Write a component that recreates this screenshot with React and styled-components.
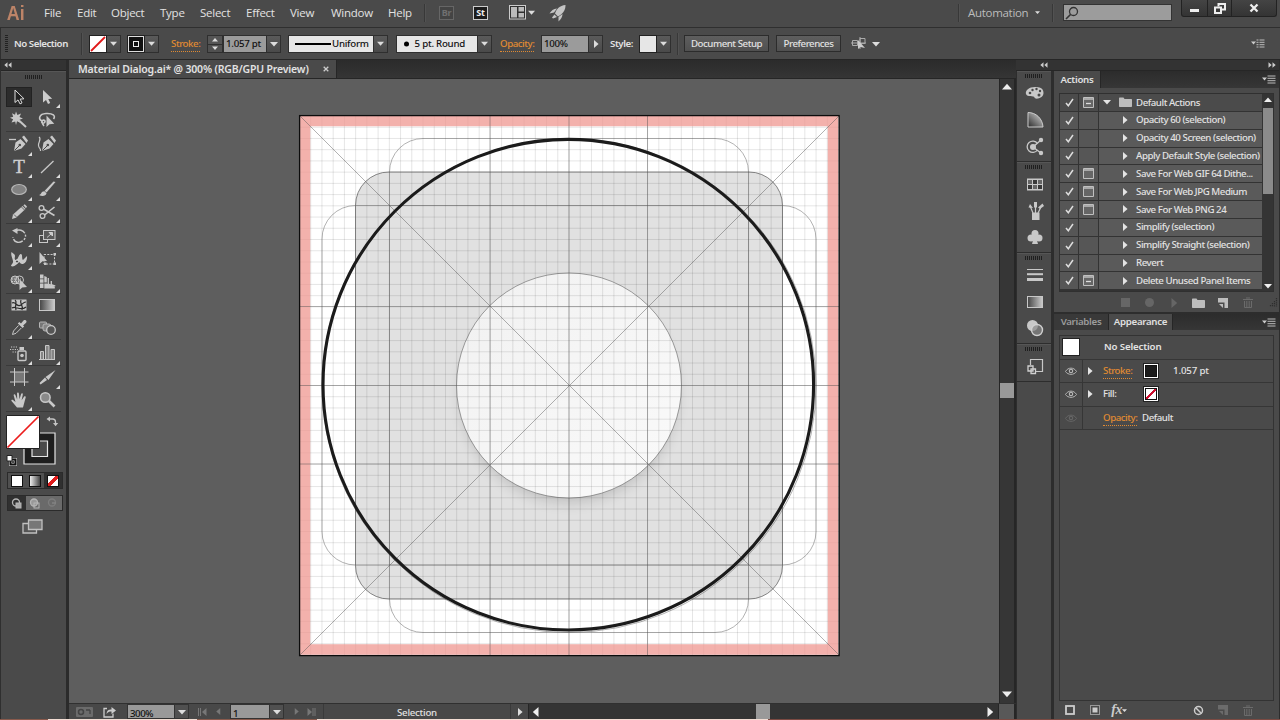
import React from 'react';
import styled, { createGlobalStyle, css } from 'styled-components';

const MENUS = [
  { name: 'File', width: 33 },
  { name: 'Edit', width: 34 },
  { name: 'Object', width: 49 },
  { name: 'Type', width: 40 },
  { name: 'Select', width: 46 },
  { name: 'Effect', width: 44 },
  { name: 'View', width: 41 },
  { name: 'Window', width: 57 },
  { name: 'Help', width: 36 },
];

const ACTIONS = [
  { name: 'Default Actions', dialog: 'minus', folder: true },
  { name: 'Opacity 60 (selection)' },
  { name: 'Opacity 40 Screen (selection)' },
  { name: 'Apply Default Style (selection)' },
  { name: 'Save For Web GIF 64 Dithe...', dialog: 'plain' },
  { name: 'Save For Web JPG Medium', dialog: 'plain' },
  { name: 'Save For Web PNG 24', dialog: 'plain' },
  { name: 'Simplify (selection)' },
  { name: 'Simplify Straight (selection)' },
  { name: 'Revert' },
  { name: 'Delete Unused Panel Items', dialog: 'minus' },
];

/* tool icons are drawn in a 20 x 20 box */
const ICONS = {
  select: (
    <path
      d="M6 3v12.5l3-2.6 2 4 2-1-1.8-3.8 3.8-.3z"
      fill="#222"
      stroke="#ddd"
      strokeWidth="1"
    />
  ),
  direct: <path d="M6 3v12.5l3-2.6 2 4 2.2-1-1.9-3.8 3.9-.3z" fill="#ccc" />,
  wand: (
    <>
      <path d="M7 1.500l1.400 3.500 3.600-1.500-1.500 3.600 3.500 1.400-3.500 1.200.8 3-3.300-1.400L7 15l-.8-3.600-3.700 1 1.600-3.200L1 7.700l3.200-1L3 3.300l3 1.500z" />
      <path d="M10 10.500l7 6.500" stroke="#c8c8c8" strokeWidth="2" />
    </>
  ),
  lasso: (
    <>
      <path
        d="M5 11C1 9 2 4 9 3.500S19 6 16.500 9M5 11c2-2 4 0 2.500 1.500S4 13 5 11c0 3 1 4 2 5"
        fill="none"
        stroke="#c8c8c8"
        strokeWidth="1.600"
      />
      <path d="M9.500 5.500v11.500l3-2.800 4.800-.4z" />
    </>
  ),
  pen: (
    <>
      <path d="M0 5.500h7" stroke="#c8c8c8" strokeWidth="1.300" />
      <path d="M5 17l1.500-8.500L11.500 5l5 5-4 4.500zM13 3l2-1.500 4 5L17.500 9z" />
      <path d="M5.500 16.500l5-5" stroke="#484848" />
      <circle cx="10.800" cy="11" r="1.300" fill="#484848" />
    </>
  ),
  curve: (
    <>
      <path d="M5 17l1.500-8.500L11.500 5l5 5-4 4.500zM13 3l2-1.500 4 5L17.500 9z" />
      <path d="M5.500 16.500l5-5" stroke="#484848" />
      <circle cx="10.800" cy="11" r="1.300" fill="#484848" />
      <path
        d="M2 3c3 2-1 5-.5 8.500S4 14 3.500 17"
        fill="none"
        stroke="#c8c8c8"
        strokeWidth="1.200"
      />
    </>
  ),
  line: <path d="M4 16L16.500 4" stroke="#c8c8c8" strokeWidth="1.300" />,
  ellipse: (
    <ellipse
      cx="10"
      cy="10.500"
      rx="7.300"
      ry="5"
      fill="#828282"
      stroke="#b8b8b8"
      strokeWidth="1.200"
    />
  ),
  brush: (
    <>
      <path d="M18.500 3L9.500 13.500 7.700 11.700 16.500 2.500z" />
      <path d="M7.500 12.200l2 2c-.5 3-4.500 3.300-7.500 1.800 2.500-.5 2-4 5.500-3.800z" />
    </>
  ),
  pencil: (
    <>
      <path d="M3 17l1-4.500L13.500 4l3 3L7 15.800z" />
      <path d="M14.300 3.200l1.500-1 2.200 2.400-1 1.700z" />
      <path d="M5 12.500l2.500 2.500M12.500 5l3 3" stroke="#484848" strokeWidth=".8" />
    </>
  ),
  scissors: (
    <>
      <circle cx="4.500" cy="6" r="2.400" fill="none" stroke="#c8c8c8" strokeWidth="1.300" />
      <circle cx="5.500" cy="14" r="2.400" fill="none" stroke="#c8c8c8" strokeWidth="1.300" />
      <path d="M6.500 7l11 6.500M7.500 13L17.500 5" stroke="#c8c8c8" strokeWidth="1.600" />
    </>
  ),
  rotate: (
    <>
      <path
        d="M6 5c7-3.500 13 3 9.500 8S4.500 17.500 4 11"
        fill="none"
        stroke="#c8c8c8"
        strokeWidth="1.400"
        strokeDasharray="11 1.500 2 1.500 2 1.500"
      />
      <path d="M3 4.500L8.500 2v6z" />
    </>
  ),
  scale: (
    <>
      <rect x="2.500" y="9.500" width="8" height="7" fill="none" stroke="#c8c8c8" />
      <rect x="6.500" y="4.500" width="11.500" height="9" fill="#5a5a5a" stroke="#c8c8c8" />
      <path d="M10 11.500l4-3.500M15.500 6.500v3.500l-3.500-3.500z" stroke="#ddd" strokeWidth=".8" />
    </>
  ),
  width: (
    <>
      <path d="M2.500 3l3 2.500c1.500 2-1 4 1 5.500 2.500.5 3-5 5-6 2.500-.5 1 5 2.500 6L18 7c.5 3-1 7-4 8-3 .5-3-2.500-4.500-2-1.500 3-5 5.500-7.500 4 0-2 2.500-2.500 2-5C3.500 9 1.500 6 2.500 3z" />
      <circle cx="8" cy="12.500" r="1.600" fill="#484848" stroke="#ddd" />
    </>
  ),
  transform: (
    <>
      <path
        d="M7 5.500h10.500v9.500H7z"
        fill="none"
        stroke="#c8c8c8"
        strokeDasharray="2 1.300"
      />
      <path d="M16.500 4h2.500v2.500h-2.500zM16.500 13.500h2.500V16h-2.500zM7 13.500h2.500V16H7z" />
      <path d="M2.500 3v12l3-2.800 4.500-.3z" />
    </>
  ),
  shapes: (
    <>
      <circle cx="6" cy="8" r="4" fill="#777" stroke="#c8c8c8" />
      <circle cx="10.500" cy="8" r="4" fill="none" stroke="#c8c8c8" />
      <path d="M3 7h10M3 9.500h9" stroke="#c8c8c8" strokeDasharray="1 1" />
      <path d="M10.500 7v11l2.700-2.600 4.800-.3z" />
    </>
  ),
  perspective: (
    <>
      <path d="M3 2.500h3.500v4H3zM3 7.300h3.500v3.500H3zM3 11.600h3.500V16H3zM7.300 4l2.500 1v5.500H7.300zM7.300 11.500h2.500l8 3.500v1.500H7.300z" />
      <path d="M11.300 6v6l6 2.500M14.300 9v3.500l4 1.500" fill="none" stroke="#c8c8c8" strokeWidth="1.300" />
    </>
  ),
  mesh: (
    <>
      <rect x="2.500" y="4.500" width="15" height="11" fill="#c4c4c4" />
      <path
        d="M3 8c4-2 5 5 9 2s3-3 5-3M6 5c3 2-1 5 1 10M12 5c-2 4 3 5 1 10M3 13c4-3 8 4 14-1"
        fill="none"
        stroke="#292929"
        strokeWidth="1.200"
      />
    </>
  ),
  gradient: (
    <rect x="2.500" y="4.500" width="15" height="11" fill="url(#grey)" stroke="#c8c8c8" />
  ),
  eyedropper: (
    <>
      <path d="M12 5.500l2.500-3c2-1.500 4 .5 2.600 2.300l-3 2.800 1 1-1.500 1.400-4.800-4.600L10.300 4z" />
      <path d="M9.500 7.500L4.500 13 3.500 16.500 7 15.300 12.300 10" fill="none" stroke="#c8c8c8" />
    </>
  ),
  blend: (
    <>
      <rect x="2.500" y="4" width="7" height="6" rx="1" fill="#777" stroke="#b5b5b5" />
      <rect x="6" y="6" width="8" height="7" rx="2" fill="#858585" stroke="#b5b5b5" />
      <circle cx="14" cy="12" r="4.300" fill="#555" stroke="#c8c8c8" strokeWidth="1.300" />
    </>
  ),
  spray: (
    <>
      <rect x="9" y="8" width="8" height="9.500" rx="1" fill="none" stroke="#c8c8c8" strokeWidth="1.400" />
      <path d="M10.500 4h4.500v3h-4.500z" />
      <circle cx="13" cy="12.500" r="1.800" />
      <path d="M2 4h7M1 6.500h8M3.500 9H8" stroke="#c8c8c8" strokeDasharray="1.200 1.200" />
    </>
  ),
  graph: (
    <g fill="#858585" stroke="#c8c8c8">
      <path d="M3.500 8.500h3v8h-3zM8.500 2.500h3.500v14H8.500zM14 6.500h3.500v10H14z" />
      <path d="M2 16.500h16" />
    </g>
  ),
  artboard: (
    <>
      <rect x="5.500" y="5" width="10" height="10" fill="#777" />
      <path d="M5.500 1v18M15.500 1v18M1 5h18.500M1 15h18.500" stroke="#c8c8c8" />
    </>
  ),
  slice: (
    <path d="M18.500 3l-10 7 3 3zM8 10.500L2.500 16l1 1.500L10 13z" />
  ),
  hand: (
    <path
      d="M8 17.500L2.500 11c-.6-1.200.9-1.800 1.800-.8L6.500 12 4.700 5.500c-.2-1.500 1.300-1.700 1.700-.4L8.200 9.500 8 3.500c0-1.500 1.800-1.500 1.900 0l.6 5.800 1.600-5.200c.5-1.300 2-.8 1.700.6l-1.200 5.500 2.400-3.500c.9-1 2.200-.2 1.600 1L14 17.500z"
    />
  ),
  zoom: (
    <>
      <circle cx="8.300" cy="7.500" r="4.800" fill="#8a8a8a" stroke="#c8c8c8" strokeWidth="1.500" />
      <path d="M12 11l5.500 5.500" stroke="#c8c8c8" strokeWidth="2.600" />
    </>
  ),
  palette: (
    <>
      <path d="M10 4C4 4 0 7.500 1 11s8 1 8.500 3.500 9 1 9-4.500S14 4 10 4z" />
      <g fill="#484848">
        <circle cx="5" cy="10" r="1.300" />
        <circle cx="7.500" cy="7" r="1.200" />
        <circle cx="11.500" cy="6" r="1.200" />
        <circle cx="15" cy="8" r="1.200" />
        <circle cx="14" cy="12" r="1.500" />
      </g>
    </>
  ),
  guide: (
    <path d="M3 17V2.500C11 2.500 17.500 8.500 18 17z" fill="url(#guide)" stroke="#ccc" />
  ),
  nodes: (
    <>
      <path
        d="M12.500 7.500a5.700 5.700 0 1 0 0 6.500"
        fill="none"
        stroke="#c8c8c8"
        strokeWidth="1.300"
      />
      <circle cx="8" cy="11" r="3" />
      <path d="M8 11l8-7M8 11l8.500 6.500" stroke="#c8c8c8" strokeWidth="1.400" />
      <circle cx="16" cy="4" r="2.200" />
      <circle cx="16" cy="17" r="2.200" />
    </>
  ),
  swatches: (
    <>
      <rect x="2" y="4.500" width="16" height="12" fill="#c8c8c8" />
      <path d="M3 6h4v4H3zM13 6h4v4h-4zM8 11h4v4H8z" fill="#666" />
      <path d="M8 6h4v4H8zM3 11h4v4H3zM13 11h4v4h-4z" fill="#393939" />
    </>
  ),
  brushes: (
    <>
      <path d="M7 11.500h7.500v7.500H7z" />
      <path d="M8 12L5.500 6M10.500 12V5M13 12l2.500-5" stroke="#c8c8c8" strokeWidth="1.200" />
      <path d="M3.500 6.500l1.500-3.500 3 4zM9 1h3v5.500H9zM13 6.500l4.500-4L19 5l-4 3z" />
    </>
  ),
  club: (
    <>
      <circle cx="10" cy="6.500" r="3.500" />
      <circle cx="6" cy="11" r="3.500" />
      <circle cx="14" cy="11" r="3.500" />
      <path d="M9.300 9h1.400l2.300 8H7z" />
    </>
  ),
  stroke: (
    <>
      <path d="M2 4.500h16" stroke="#c8c8c8" strokeWidth="1" />
      <path d="M2 9.200h16" stroke="#c8c8c8" strokeWidth="2" />
      <path d="M2 14.500h16" stroke="#c8c8c8" strokeWidth="3" />
    </>
  ),
  transparency: (
    <>
      <circle cx="7.500" cy="7.500" r="5.500" />
      <circle cx="12" cy="12" r="5.500" fill="#888" fillOpacity=".7" stroke="#d0d0d0" strokeWidth="1.400" />
    </>
  ),
  layers: (
    <>
      <path d="M5.500 9V3.500h12v12H11" fill="none" stroke="#c8c8c8" strokeWidth="1.200" />
      <path d="M3 10h5v5H3zM6 13h4.500v4.500H6z" fill="#484848" stroke="#d0d0d0" strokeWidth="1.300" />
    </>
  ),
};

const TOOL_GROUPS = [
  { id: 'selection', row: 23, tools: [['select', 'active'], ['direct', 'more'], ['wand'], ['lasso']] },
  {
    id: 'drawing',
    row: 22.5,
    top: 1,
    tools: [
      ['pen', 'more'],
      ['curve'],
      ['type', 'more'],
      ['line', 'more'],
      ['ellipse', 'more'],
      ['brush', 'more'],
      ['pencil', 'more'],
      ['scissors', 'more'],
    ],
  },
  {
    id: 'shape',
    row: 23,
    tools: [
      ['rotate', 'more'],
      ['scale', 'more'],
      ['width', 'more'],
      ['transform'],
      ['shapes', 'more'],
      ['perspective', 'more'],
    ],
  },
  { id: 'paint', row: 22.5, tools: [['mesh'], ['gradient'], ['eyedropper', 'more'], ['blend']] },
  { id: 'symbols', row: 25, tools: [['spray', 'more'], ['graph', 'more']] },
  { id: 'view', row: 22.5, tools: [['artboard'], ['slice', 'more'], ['hand', 'more'], ['zoom']] },
];

const DOCK_GROUPS = [
  { id: 'color', height: 91, icons: ['palette', 'guide', 'nodes'] },
  { id: 'swatch', height: 91, icons: ['swatches', 'brushes', 'club'] },
  { id: 'stroke', height: 91, icons: ['stroke', 'gradient', 'transparency'] },
  { id: 'layers', height: 38, icons: ['layers'] },
];

function Glyph({ name, size = 20 }) {
  return (
    <Svg width={size} height={size} viewBox="0 0 20 20" fill="#c8c8c8">
      {ICONS[name]}
    </Svg>
  );
}

function Arrow({ dir = 'down', size = 8, color = '#ddd' }) {
  const turn = { down: 0, up: 180, left: 90, right: 270 }[dir];
  return (
    <Svg width={size} height={size} viewBox="0 0 10 10">
      <path d="M0 2.500h10L5 8.200z" fill={color} transform={`rotate(${turn} 5 5)`} />
    </Svg>
  );
}

function MenuBar() {
  return (
    <StyledMenuBar>
      <AppLogo>Ai</AppLogo>
      {MENUS.map(({ name, width }) => (
        <MenuItem key={name} $width={width}>
          {name}
        </MenuItem>
      ))}
      <Divider />
      <Badge $ml={14} $dim>
        Br
      </Badge>
      <Badge $ml={19}>St</Badge>
      <Slot $ml={21}>
        <Svg width="17" height="15" viewBox="0 0 17 15">
          <rect x=".5" y=".5" width="16" height="13.500" fill="#303030" stroke="#ccc" />
          <path d="M2 2h6v10.500H2zM9.500 2H15v4.500H9.500zM9.500 8H15v4.500H9.500z" fill="#bbb" />
        </Svg>
      </Slot>
      <Slot $ml={2}>
        <Arrow size={7} />
      </Slot>
      <Slot $ml={14}>
        <Svg width="18" height="18" viewBox="0 0 18 18" fill="#c4c4c4">
          <path d="M16.500 1c-6 .5-9 4-10.500 8.500l3 3C13.500 10 16.500 7 16.500 1z" />
          <path d="M8 4.500C4.500 4.500 2 7 .5 9.500L5 8.500zM13.500 10c0 3-1.500 5-4 7.500v-4.500zM5.500 10.500l2.500 2.500-4 1.500-1-1z" />
        </Svg>
      </Slot>
      <Spacer />
      <Divider />
      <Workspace>Automation</Workspace>
      <Slot $ml={6}>
        <Arrow size={5} />
      </Slot>
      <Divider $ml={12} />
      <SearchBox>
        <Svg width="14" height="14" viewBox="0 0 14 14">
          <circle cx="8.500" cy="5.500" r="4" fill="none" stroke="#333" strokeWidth="1.300" />
          <path d="M5.500 8.500L1 13" stroke="#333" strokeWidth="1.600" />
        </Svg>
      </SearchBox>
      <WindowButtons>
        <WindowButton $width={25}>
          <Svg width="11" height="10">
            <path d="M1 7.500h9" stroke="#eee" strokeWidth="3" />
          </Svg>
        </WindowButton>
        <WindowButton $width={24}>
          <Svg width="12" height="11" viewBox="0 0 12 11" fill="none" stroke="#eee" strokeWidth="2">
            <path d="M4.500 3.500V1H11v5.500H8" />
            <path d="M1 4.500h6V10H1z" />
          </Svg>
        </WindowButton>
        <WindowButton $width={45}>
          <Svg width="10" height="10" viewBox="0 0 10 10">
            <path d="M1.500 1.500l7 7M8.500 1.500l-7 7" stroke="#eee" strokeWidth="2.300" />
          </Svg>
        </WindowButton>
      </WindowButtons>
    </StyledMenuBar>
  );
}

function ControlBar() {
  return (
    <StyledControlBar>
      <Grip $vertical />
      <Label $width={67} $ml={6} $bold>
        No Selection
      </Label>
      <Divider $tall />
      <Swatch $ml={7}>
        <Svg width="16" height="16">
          <path d="M1 15L15 1" stroke="#e01818" strokeWidth="1.800" />
        </Svg>
      </Swatch>
      <DropButton>
        <Arrow size={7} />
      </DropButton>
      <Swatch $ml={6} $dark>
        <Svg width="16" height="16" fill="none">
          <rect x=".5" y=".5" width="15" height="15" stroke="#ddd" />
          <rect x="5.500" y="5.500" width="5" height="5" stroke="#eee" />
        </Svg>
      </Swatch>
      <DropButton>
        <Arrow size={7} />
      </DropButton>
      <Label $width={36} $ml={12}>
        <Hot>Stroke:</Hot>
      </Label>
      <Spinner>
        <Arrow dir="up" size={6} />
        <Arrow size={6} />
      </Spinner>
      <Field $width={44}>1.057 pt</Field>
      <DropButton>
        <Arrow size={8} />
      </DropButton>
      <Field $light $width={86} $ml={7}>
        <Svg width="38" height="4">
          <path d="M1 2h36" stroke="#000" strokeWidth="2" />
        </Svg>
        <span>Uniform</span>
      </Field>
      <DropButton>
        <Arrow size={7} />
      </DropButton>
      <Field $light $wide $width={82} $ml={8}>
        <Svg width="10" height="6">
          <circle cx="4.500" cy="3" r="2.500" />
        </Svg>
        <span>5 pt. Round</span>
      </Field>
      <DropButton>
        <Arrow size={7} />
      </DropButton>
      <Label $width={41} $ml={8}>
        <Hot>Opacity:</Hot>
      </Label>
      <Field $width={48}>100%</Field>
      <DropButton>
        <Arrow dir="right" size={8} />
      </DropButton>
      <Label $width={29} $ml={7} $bold>
        Style:
      </Label>
      <Swatch $soft />
      <DropButton>
        <Arrow size={7} />
      </DropButton>
      <Divider $ml={6} $tall />
      <PushButton $width={85} $ml={6}>
        Document Setup
      </PushButton>
      <PushButton $width={65} $ml={7}>
        Preferences
      </PushButton>
      <Slot $ml={10}>
        <Svg width="16" height="13" viewBox="0 0 16 13">
          <path d="M1.500 3.500h5v5h-5zM9 1.500h5v5H9zM0 6h15M9 0v12" fill="none" stroke="#aaa" />
          <path d="M7 3v9l2.500-2 4.500 1z" fill="#ccc" />
        </Svg>
      </Slot>
      <Slot $ml={5}>
        <Arrow size={8} />
      </Slot>
      <Spacer />
      <MenuGlyph $right={15}>
        <PanelMenuIcon dotted />
      </MenuGlyph>
    </StyledControlBar>
  );
}

function PanelMenuIcon({ dotted }) {
  return (
    <Svg width="14" height="9" viewBox="0 0 14 9">
      <path d="M0 2.500h5L2.500 5.500z" fill="#ccc" />
      <path
        d="M5.500 1h8M5.500 3.300h8M5.500 5.700h8M5.500 8h8"
        stroke="#bbb"
        strokeWidth="1"
        strokeDasharray={dotted ? '2 1 6' : undefined}
      />
    </Svg>
  );
}

function CollapseArrows({ right }) {
  return (
    <Svg width="8" height="6" viewBox="0 0 8 6">
      <path
        d="M3.500 .3v5.400L.3 3zM7.500 .3v5.400L4.300 3z"
        fill="#ccc"
        transform={right ? 'rotate(180 4 3)' : undefined}
      />
    </Svg>
  );
}

function Toolbox() {
  return (
    <StyledToolbox>
      <DockHeader>
        <CollapseArrows />
      </DockHeader>
      <ToolboxBody>
        <GripRow $height={13}>
          <Grip />
        </GripRow>
        {TOOL_GROUPS.map(({ id, row, top, tools }) => (
          <ToolGroup key={id} $row={row} $top={top}>
            {tools.map(([name, state]) => (
              <Tool key={name} $active={state === 'active'} $more={state === 'more'}>
                {name === 'type' ? <TypeGlyph>T</TypeGlyph> : <Glyph name={name} />}
              </Tool>
            ))}
          </ToolGroup>
        ))}
        <ColorWell>
          <Svg width="60" height="55" viewBox="0 0 60 55">
            <path d="M18 21h31v31H18z" fill="#1e1e1e" stroke="#e4e4e4" strokeWidth="1.200" />
            <path d="M26 29h15.500v15.500H26z" fill="#4a4a4a" stroke="#e4e4e4" strokeWidth="1.200" />
            <path d="M.5 3.500h33v33h-33z" fill="#fff" stroke="#222" />
            <path d="M1.500 35.500l31-31" stroke="#ec1c1c" strokeWidth="1.700" />
            <path d="M43 7h3.500c2 0 3 1 3 3v2" fill="none" stroke="#c4c4c4" strokeWidth="1.300" />
            <path d="M40.500 7l3.500-2.500v5zM47 11h5.200l-2.600 3.200z" fill="#c4c4c4" />
            <path d="M4.500 47.500h5v5h-5z" fill="none" stroke="#ddd" strokeWidth="3" />
            <path d="M4.500 47.500h5v5h-5z" fill="none" stroke="#111" strokeWidth="2" />
            <path d="M1 43.500h5v5.500H1z" fill="#fff" stroke="#222" />
          </Svg>
        </ColorWell>
        <ModeRow>
          <ModeCell>
            <Chip $fill="#fff" />
          </ModeCell>
          <ModeCell>
            <Chip $fill="linear-gradient(90deg, #eee, #444)" />
          </ModeCell>
          <ModeCell $active>
            <Chip $fill="linear-gradient(135deg, #fff 37%, #e01c1c 38% 62%, #fff 63%)" />
          </ModeCell>
        </ModeRow>
        <ModeRow $short>
          <ModeCell $active>
            <DrawIcon />
          </ModeCell>
          <ModeCell $lit>
            <DrawIcon behind />
          </ModeCell>
          <ModeCell $lit>
            <DrawIcon dim />
          </ModeCell>
        </ModeRow>
        <ScreenMode>
          <Svg width="21" height="16" viewBox="0 0 21 16">
            <path d="M1 4.500h13.500v9.500H1z" fill="#555" stroke="#c0c0c0" strokeWidth="1.300" />
            <path d="M6.500 1h13.500v9.500H6.500z" fill="#777" stroke="#c0c0c0" strokeWidth="1.300" />
          </Svg>
        </ScreenMode>
      </ToolboxBody>
    </StyledToolbox>
  );
}

function DrawIcon({ behind, dim }) {
  return (
    <Svg width="12" height="11" viewBox="0 0 12 11" opacity={dim ? 0.25 : 1}>
      <circle cx="5" cy="4.500" r="3.500" fill={behind ? '#999' : 'none'} stroke="#b5b5b5" strokeWidth="1.300" />
      {!dim && <rect x="5" y="5" width="5" height="5" fill={behind ? 'none' : '#aaa'} stroke="#b5b5b5" />}
      {dim && <path d="M5 5h4" stroke="#ccc" strokeWidth="1.500" />}
    </Svg>
  );
}

const UNIT = 11.23;
const CX = 569;
const CY = 385.5;
const steps = Array.from({ length: 47 }, (_, i) => (i - 23) * UNIT);

function Artboard() {
  return (
    <Svg width="541" height="541" viewBox="299 115 541 541">
      <defs>
        <linearGradient id="disc" x1="0" y1="0" x2="1" y2="1">
          <stop offset="0" stopColor="#f1f1f1" />
          <stop offset="1" stopColor="#fafafa" />
        </linearGradient>
        <filter id="soft" x="-20%" y="-20%" width="140%" height="150%">
          <feGaussianBlur stdDeviation="7" />
        </filter>
      </defs>
      <rect x="299.500" y="115.500" width="539.500" height="540" fill="#fff" />
      <rect x="355.500" y="172" width="427" height="427" rx="33.500" fill="#e1e1e1" />
      <circle cx={CX} cy={CY + 9} r="108" fill="#000" opacity=".15" filter="url(#soft)" />
      <circle cx={CX} cy={CY} r="112.500" fill="url(#disc)" />
      <g stroke="#000" strokeOpacity=".1">
        {steps.map((d) => (
          <path key={d} d={`M${CX + d} 116v539M300 ${CY + d}h539`} />
        ))}
      </g>
      <rect
        x="305"
        y="121"
        width="528"
        height="528.500"
        fill="none"
        stroke="#ee938c"
        strokeOpacity=".72"
        strokeWidth="10.500"
      />
      <g fill="none" stroke="#555" strokeOpacity=".45" strokeWidth="1">
        <rect x="389.500" y="138.500" width="359" height="494" rx="33.500" />
        <rect x="322" y="205.500" width="494" height="359.500" rx="33.500" />
        <rect x="355.500" y="172" width="427" height="427" rx="33.500" strokeOpacity=".7" />
        <circle cx={CX} cy={CY} r="247" />
        <circle cx={CX} cy={CY} r="112.500" strokeOpacity=".55" />
        <path d="M490 116v539M569 116v539M647.500 116v539M300 306.500h539M300 385.500h539M300 464h539" />
        <path d="M300 116l539 539M839 116L300 655" />
        <path d="M389.500 206v359M748.500 206v359M389.500 205.500h359M389.500 565h359" strokeOpacity=".2" />
      </g>
      <circle cx="568.300" cy="384.700" r="245.300" fill="none" stroke="#1b1b1b" strokeWidth="3.100" />
      <rect x="299.600" y="115.600" width="539.500" height="540" fill="none" stroke="#0c0c0c" strokeWidth="1.300" />
    </Svg>
  );
}

function StatusBar() {
  return (
    <StyledStatusBar>
      <Slot $ml={7}>
        <Svg width="17" height="10" viewBox="0 0 17 10">
          <rect width="17" height="10" rx="1" fill="#6b6b6b" />
          <circle cx="5" cy="5" r="2.500" fill="none" stroke="#444" strokeWidth="1.500" />
          <path d="M10 3l4 0M14 3v4" stroke="#444" strokeWidth="1.300" />
        </Svg>
      </Slot>
      <Slot $ml={10}>
        <Svg width="13" height="12" viewBox="0 0 13 12">
          <path d="M4 2.500H1v8.500h9V7.500" fill="none" stroke="#ccc" strokeWidth="1.300" />
          <path d="M3.500 8C4 4 6 3.500 8.500 3.500V1L13 4.500 8.500 8V5.500C6 5.500 5 6 3.500 8z" fill="#ccc" />
        </Svg>
      </Slot>
      <StatusField $ml={11} $width={48}>
        300%
      </StatusField>
      <StatusDrop>
        <Arrow size={8} />
      </StatusDrop>
      <Slot $ml={9}>
        <Svg width="9" height="8">
          <path d="M.5 0v8M2.500 0v8" stroke="#777" />
          <path d="M8.500 0v8L4 4z" fill="#777" />
        </Svg>
      </Slot>
      <Slot $ml={8}>
        <Arrow dir="left" size={7} color="#777" />
      </Slot>
      <StatusField $ml={8} $width={40}>
        1
      </StatusField>
      <StatusDrop>
        <Arrow size={8} />
      </StatusDrop>
      <Slot $ml={9}>
        <Arrow dir="right" size={7} color="#777" />
      </Slot>
      <Slot $ml={7}>
        <Svg width="9" height="8">
          <path d="M6 0v8M8 0v8" stroke="#777" />
          <path d="M.5 0v8L5 4z" fill="#777" />
        </Svg>
      </Slot>
      <StatusText>Selection</StatusText>
      <StatusNext>
        <Arrow dir="right" size={8} />
      </StatusNext>
      <HorizontalTrack>
        <Arrow dir="left" size={10} color="#eee" />
        <HorizontalThumb />
        <Arrow dir="right" size={10} color="#eee" />
      </HorizontalTrack>
      <Corner />
    </StyledStatusBar>
  );
}

function Document() {
  return (
    <StyledDocument>
      <DocumentTabs>
        <DocumentTab>
          <span>Material Dialog.ai* @ 300% (RGB/GPU Preview)</span>
          <Svg width="6" height="6" viewBox="0 0 6 6">
            <path d="M.7 .7l4.600 4.600M5.300 .7L.7 5.300" stroke="#ccc" strokeWidth="1.300" />
          </Svg>
        </DocumentTab>
      </DocumentTabs>
      <CanvasRow>
        <Canvas>
          <Artboard />
        </Canvas>
        <VerticalTrack>
          <Arrow dir="up" size={10} color="#eee" />
          <VerticalThumb />
          <Arrow size={10} color="#eee" />
        </VerticalTrack>
      </CanvasRow>
      <StatusBar />
    </StyledDocument>
  );
}

function IconDock() {
  return (
    <StyledIconDock>
      {DOCK_GROUPS.map(({ id, height, icons }) => (
        <DockGroup key={id} $height={height}>
          <GripRow $height={9}>
            <Grip />
          </GripRow>
          <DockIcons>
            {icons.map((name) => (
              <Glyph key={name} name={name} />
            ))}
          </DockIcons>
        </DockGroup>
      ))}
    </StyledIconDock>
  );
}

function ActionRow({ name, dialog, folder }) {
  return (
    <StyledActionRow>
      <ActionCell $folder={folder}>
        <Svg width="9" height="9" viewBox="0 0 9 9">
          <path d="M1 5l2.300 2.800L8 1" fill="none" stroke="#ddd" strokeWidth="1.500" />
        </Svg>
      </ActionCell>
      <ActionCell $folder={folder}>
        {dialog && (
          <Svg width="11" height="11" viewBox="0 0 11 11">
            <path d="M.5 .5h10v10H.5z" fill="#666" stroke="#c0c0c0" />
            <path d="M.5 2h10" stroke="#c0c0c0" strokeWidth="1.500" />
            {dialog === 'minus' && <path d="M3 6.500h5" stroke="#ddd" strokeWidth="1.300" />}
          </Svg>
        )}
      </ActionCell>
      <ActionName $folder={folder}>
        <Arrow dir={folder ? 'down' : 'right'} size={8} color="#e4e4e4" />
        {folder && <FolderIcon />}
        <span>{name}</span>
      </ActionName>
    </StyledActionRow>
  );
}

function FolderIcon() {
  return (
    <Svg width="13" height="10" viewBox="0 0 13 10">
      <path d="M0 1.200Q0 .5.700.5h3.800l1 1.500H12.300q.7 0 .7.700V9.300q0 .7-.7.700H.7Q0 10 0 9.300z" fill="#bdbdbd" />
    </Svg>
  );
}

function NewIcon({ color = '#bdbdbd' }) {
  return (
    <Svg width="10" height="10" viewBox="0 0 10 10">
      <path d="M0 0h10v10H6.500V4.500H0z" fill={color} />
      <path d="M1 6h4v4z" fill={color} />
    </Svg>
  );
}

function TrashIcon() {
  return (
    <Svg width="10" height="11" viewBox="0 0 10 11" fill="none" stroke="#6b6b6b">
      <path d="M0 2.500h10M3 1h4M1.500 4v6.500h7V4M3.800 4v6M6.200 4v6" />
    </Svg>
  );
}

function ResizeGrip() {
  return (
    <Svg width="9" height="9" viewBox="0 0 9 9">
      <path
        d="M7.500 0v9M5.500 3v6M3.500 5v4M1.500 7v2"
        stroke="#2e2e2e"
        strokeWidth="1.200"
        strokeDasharray="1.200 .9"
      />
    </Svg>
  );
}

function ActionsPanel() {
  return (
    <>
      <PanelTabs $height={17}>
        <PanelTab $active $width={47}>
          Actions
        </PanelTab>
        <Spacer />
        <MenuGlyph $right={3}>
          <PanelMenuIcon />
        </MenuGlyph>
      </PanelTabs>
      <PanelBody $height={224}>
        <ActionBox>
          <ActionList>
            {ACTIONS.map((action) => (
              <ActionRow key={action.name} {...action} />
            ))}
          </ActionList>
          <ListTrack>
            <Arrow dir="up" size={8} color="#eee" />
            <ListThumb />
            <Spacer />
            <Arrow size={8} color="#eee" />
          </ListTrack>
        </ActionBox>
        <PanelFooter $height={21} $left={62}>
          <FooterCell>
            <Svg width="9" height="9">
              <path d="M0 0h9v9H0z" fill="#666" />
            </Svg>
          </FooterCell>
          <FooterCell>
            <Svg width="9" height="9">
              <circle cx="4.500" cy="4.500" r="4.500" fill="#666" />
            </Svg>
          </FooterCell>
          <FooterCell>
            <Arrow dir="right" size={10} color="#666" />
          </FooterCell>
          <FooterCell>
            <FolderIcon />
          </FooterCell>
          <FooterCell>
            <NewIcon />
          </FooterCell>
          <FooterCell>
            <TrashIcon />
          </FooterCell>
          <Spacer />
          <ResizeGrip />
        </PanelFooter>
      </PanelBody>
    </>
  );
}

function Eye({ dim }) {
  return (
    <Svg width="12" height="8" viewBox="0 0 12 8" opacity={dim ? 0.25 : 1}>
      <path d="M.5 4.500C3 0 9 0 11.500 4.500 9 8.300 3 8.300.5 4.500z" fill="#444" stroke="#b5b5b5" />
      <circle cx="6" cy="4" r="2.300" fill="#b5b5b5" />
      <circle cx="6" cy="4" r="1" fill="#333" />
    </Svg>
  );
}

function AppearancePanel() {
  return (
    <>
      <PanelTabs $height={16}>
        <PanelTab $width={55}>Variables</PanelTab>
        <PanelTab $active $width={64}>
          Appearance
        </PanelTab>
        <Spacer />
        <MenuGlyph $right={3}>
          <PanelMenuIcon />
        </MenuGlyph>
      </PanelTabs>
      <PanelBody $grow>
        <AppearanceBox>
          <AppearanceRow>
            <Thumbnail />
            <Label $ml={24} $bold $roomy>
              No Selection
            </Label>
          </AppearanceRow>
          <AppearanceRow>
            <EyeCell>
              <Eye />
            </EyeCell>
            <Arrow dir="right" size={8} color="#e4e4e4" />
            <Label $width={40} $ml={9}>
              <Hot>Stroke:</Hot>
            </Label>
            <MiniSwatch>
              <Chip $fill="#1c1c1c" />
            </MiniSwatch>
            <Label $ml={14} $roomy>
              1.057 pt
            </Label>
          </AppearanceRow>
          <AppearanceRow>
            <EyeCell>
              <Eye />
            </EyeCell>
            <Arrow dir="right" size={8} color="#e4e4e4" />
            <Label $width={40} $ml={9}>
              Fill:
            </Label>
            <MiniSwatch>
              <Chip $fill="linear-gradient(135deg, #fff 40%, #cc1030 41% 59%, #fff 60%)" />
            </MiniSwatch>
          </AppearanceRow>
          <AppearanceRow>
            <EyeCell>
              <Eye dim />
            </EyeCell>
            <Label $width={39} $ml={17}>
              <Hot>Opacity:</Hot>
            </Label>
            <Label>Default</Label>
          </AppearanceRow>
        </AppearanceBox>
        <PanelFooter $height={18} $left={7}>
          <FooterCell>
            <Svg width="10" height="10">
              <rect x="1" y="1" width="8" height="8" fill="none" stroke="#ccc" strokeWidth="1.800" />
            </Svg>
          </FooterCell>
          <FooterCell>
            <Svg width="10" height="10">
              <rect x=".5" y=".5" width="9" height="9" fill="none" stroke="#999" />
              <rect x="2.500" y="2.500" width="5" height="5" fill="#ccc" />
            </Svg>
          </FooterCell>
          <FooterCell>
            <Fx>fx</Fx>
            <Arrow size={5} />
          </FooterCell>
          <Spacer />
          <FooterCell>
            <Svg width="11" height="11">
              <circle cx="5.500" cy="5.500" r="4" fill="none" stroke="#ccc" strokeWidth="1.500" />
              <path d="M2.500 2.500l6 6" stroke="#ccc" strokeWidth="1.500" />
            </Svg>
          </FooterCell>
          <FooterCell>
            <NewIcon color="#6b6b6b" />
          </FooterCell>
          <FooterCell $last>
            <TrashIcon />
          </FooterCell>
        </PanelFooter>
      </PanelBody>
    </>
  );
}

function App() {
  return (
    <Page>
      <GlobalStyle />
      <Defs width="0" height="0">
        <linearGradient id="grey">
          <stop offset="0" stopColor="#444" />
          <stop offset="1" stopColor="#ccc" />
        </linearGradient>
        <linearGradient id="guide" x1="0" y1="1" x2="1" y2="0">
          <stop offset="0" stopColor="#2a2a2a" />
          <stop offset="1" stopColor="#ddd" />
        </linearGradient>
      </Defs>
      <MenuBar />
      <ControlBar />
      <Workbench>
        <Toolbox />
        <Document />
        <RightSide>
          <DockHeader $split>
            <CollapseArrows />
            <CollapseArrows right />
          </DockHeader>
          <RightColumns>
            <IconDock />
            <Panels>
              <ActionsPanel />
              <AppearancePanel />
            </Panels>
          </RightColumns>
        </RightSide>
      </Workbench>
      <BottomEdge />
    </Page>
  );
}

const GlobalStyle = createGlobalStyle`
  * {
    box-sizing: border-box;
  }
  body {
    margin: 0;
    overflow: hidden;
    background: #2b2b2b;
  }
`;

const Page = styled.div`
  width: 1280px;
  height: 720px;
  display: flex;
  flex-direction: column;
  background: #2d2d2d;
  color: #e2e2e2;
  font-family: 'Noto Sans', 'Liberation Sans', sans-serif;
  font-size: 9.7px;
  font-weight: 500;
  letter-spacing: -0.45px;
  line-height: 1;
  white-space: nowrap;
  overflow: hidden;
`;

const Svg = styled.svg`
  display: block;
  flex: none;
  overflow: visible;
`;

const Defs = styled.svg`
  position: absolute;
`;

const Spacer = styled.div`
  flex: 1;
`;

const Slot = styled.div`
  flex: none;
  margin-left: ${({ $ml }) => $ml || 0}px;
`;

const Divider = styled.div`
  flex: none;
  width: 1px;
  height: ${({ $tall }) => ($tall ? 22 : 18)}px;
  margin-left: ${({ $ml }) => $ml || 0}px;
  background: #383838;
  box-shadow: 1px 0 #525252;
`;

const StyledMenuBar = styled.header`
  flex: none;
  height: 28px;
  display: flex;
  align-items: center;
  padding-bottom: 2px;
  background: #4a4a4a;
  border-bottom: 1px solid #2f2f2f;
`;

const AppLogo = styled.div`
  width: 36px;
  padding-left: 8px;
  color: #bd8468;
  font-size: 21px;
  font-weight: 700;
  letter-spacing: 0;
  font-family: 'Liberation Sans', sans-serif;
  transform: scaleX(0.85);
  transform-origin: left;
`;

const MenuItem = styled.div`
  flex: none;
  box-sizing: content-box;
  width: ${({ $width }) => $width}px;
  font-family: 'Open Sans', sans-serif;
  font-size: 11.5px;
  font-weight: 500;
  letter-spacing: -0.25px;

  ${AppLogo} + & {
    margin-left: 8px;
  }
`;

const Badge = styled.div`
  flex: none;
  width: 15px;
  height: 14px;
  margin-left: ${({ $ml }) => $ml}px;
  border: 1px solid ${({ $dim }) => ($dim ? '#666' : '#ccc')};
  background: ${({ $dim }) => ($dim ? '#444' : '#1d1d1d')};
  color: ${({ $dim }) => ($dim ? '#707070' : '#eee')};
  font-size: 9px;
  font-weight: 700;
  letter-spacing: -0.2px;
  line-height: 12px;
  text-align: center;
`;

const Workspace = styled.div`
  width: 61px;
  margin-left: 9px;
  color: #bcbcbc;
  font-family: 'Open Sans', sans-serif;
  font-size: 11.5px;
  letter-spacing: -0.3px;
`;

const SearchBox = styled.div`
  flex: none;
  width: 109px;
  height: 17px;
  margin: 0 9px 0 10px;
  padding: 1px;
  background: #9c9c9c;
  border: 1px solid #333;
`;

const WindowButtons = styled.div`
  flex: none;
  align-self: flex-start;
  display: flex;
  height: 17px;
  margin-right: 3px;
  background: linear-gradient(#444, #343434);
  border: 1px solid #222;
  border-top: 0;
  border-radius: 0 0 3px 3px;
`;

const WindowButton = styled.div`
  width: ${({ $width }) => $width}px;
  display: flex;
  align-items: center;
  justify-content: center;

  & + & {
    border-left: 1px solid #222;
  }
`;

const StyledControlBar = styled.div`
  flex: none;
  height: 32px;
  display: flex;
  align-items: center;
  padding-left: 4px;
  background: #4a4a4a;
  border-left: 1px solid #2f2f2f;
  border-bottom: 1px solid #262626;
`;

const Grip = styled.div`
  flex: none;
  width: 18px;
  height: 4px;
  background: repeating-linear-gradient(90deg, #1f1f1f 0 1px, #4a4a4a 1px 2px);

  ${({ $vertical }) =>
    $vertical &&
    css`
      width: 3px;
      height: 18px;
      background: repeating-linear-gradient(#222 0 1px, #4a4a4a 1px 2px);
    `}
`;

const Label = styled.div`
  flex: none;
  width: ${({ $width }) => ($width ? `${$width}px` : 'auto')};
  margin-left: ${({ $ml }) => $ml || 0}px;
  font-weight: ${({ $bold }) => ($bold ? 600 : 500)};
  letter-spacing: ${({ $roomy }) => ($roomy ? '-0.15px' : 'inherit')};
`;

const Hot = styled.span`
  padding-bottom: 1px;
  color: #e08a32;
  border-bottom: 1px dotted #e08a32;
`;

const Swatch = styled.div`
  flex: none;
  width: 18px;
  height: 18px;
  margin-left: ${({ $ml }) => $ml || 0}px;
  background: ${({ $dark, $soft }) => ($dark && '#111') || ($soft && '#e6e6e6') || '#fff'};
  border: 1px solid #222;
`;

const DropButton = styled.div`
  flex: none;
  width: 14px;
  height: 18px;
  display: flex;
  align-items: center;
  justify-content: center;
  background: linear-gradient(#5a5a5a, #4a4a4a);
  border: 1px solid #2f2f2f;
  border-left: 0;
`;

const Spinner = styled.div`
  flex: none;
  width: 16px;
  height: 18px;
  display: flex;
  flex-direction: column;
  align-items: center;
  justify-content: space-between;
  padding: 1px;
  background: linear-gradient(#555 48%, #2f2f2f 48% 54%, #505050 54%);
  border: 1px solid #2f2f2f;
`;

const Field = styled.div`
  flex: none;
  width: ${({ $width }) => $width}px;
  height: 18px;
  display: flex;
  align-items: center;
  justify-content: ${({ $light }) => ($light ? 'space-between' : 'flex-start')};
  margin-left: ${({ $ml }) => $ml || 0}px;
  padding: ${({ $light }) => ($light ? '0 5px 0 5px' : '0 2px')};
  padding-right: ${({ $wide }) => ($wide ? '12px' : '5px')};
  background: ${({ $light }) => ($light ? '#e6e6e6' : '#9b9b9b')};
  border: 1px solid #2f2f2f;
  color: #111;
  letter-spacing: -0.25px;
`;

const PushButton = styled.div`
  flex: none;
  width: ${({ $width }) => $width}px;
  height: 17px;
  margin-left: ${({ $ml }) => $ml}px;
  background: linear-gradient(#5e5e5e, #505050);
  border: 1px solid #2c2c2c;
  line-height: 15px;
  text-align: center;
`;

const MenuGlyph = styled.div`
  flex: none;
  align-self: center;
  margin-right: ${({ $right }) => $right}px;
`;

const Workbench = styled.div`
  flex: 1;
  min-height: 0;
  display: flex;
`;

const StyledToolbox = styled.aside`
  flex: none;
  width: 69px;
  display: flex;
  flex-direction: column;
  border-left: 1px solid #2f2f2f;
  border-right: 3px solid #2b2b2b;
`;

const DockHeader = styled.div`
  flex: none;
  height: 11px;
  display: flex;
  align-items: center;
  justify-content: space-between;
  padding: 0 3px;
  background: #333;
  border-bottom: 1px solid #262626;

  ${({ $split }) =>
    $split &&
    css`
      padding: 0 3px 0 24px;
    `}
`;

const ToolboxBody = styled.div`
  flex: 1;
  background: #4a4a4a;
  border-top: 1px solid #565656;
`;

const GripRow = styled.div`
  height: ${({ $height }) => $height}px;
  display: flex;
  justify-content: center;
  padding-top: 3px;
`;

const ToolGroup = styled.div`
  display: grid;
  grid-template-columns: 28px 28px;
  grid-auto-rows: ${({ $row }) => $row}px;
  margin: 0 5px;
  padding-top: ${({ $top }) => $top || 0}px;
  border-bottom: 1px solid #3a3a3a;
`;

const Tool = styled.div`
  position: relative;
  display: flex;
  align-items: center;
  justify-content: center;
  width: 26px;

  ${({ $active }) =>
    $active &&
    css`
      height: 20px;
      align-self: center;
      background: #2c2c2c;
      border: 1px solid #222;
    `}

  ${({ $more }) =>
    $more &&
    css`
      &::after {
        content: '';
        position: absolute;
        right: 0;
        bottom: 0;
        border: 2px solid transparent;
        border-right-color: #ddd;
        border-bottom-color: #ddd;
      }
    `}
`;

const TypeGlyph = styled.span`
  color: #cfcfcf;
  font-family: 'Liberation Serif', serif;
  font-size: 19px;
  letter-spacing: 0;
  -webkit-text-stroke: 0.4px #cfcfcf;
`;

const ColorWell = styled.div`
  height: 60px;
  padding-left: 5px;
`;

const ModeRow = styled.div`
  display: grid;
  grid-template-columns: repeat(3, 18px);
  width: 56px;
  height: ${({ $short }) => ($short ? 16 : 17)}px;
  margin: ${({ $short }) => ($short ? '6px 0 0 6px' : '0 0 0 6px')};
  background: #555;
  border: 1px solid #2b2b2b;
`;

const ModeCell = styled.div`
  display: flex;
  align-items: center;
  justify-content: center;
  background: ${({ $active, $lit }) => ($active && '#303030') || ($lit && '#6a6a6a') || '#505050'};
`;

const Chip = styled.div`
  width: 12px;
  height: 12px;
  background: ${({ $fill }) => $fill};
  border: 1px solid #111;
`;

const ScreenMode = styled.div`
  padding: 8px 0 0 21px;
`;

const StyledDocument = styled.main`
  flex: none;
  width: 947px;
  display: flex;
  flex-direction: column;
`;

const DocumentTabs = styled.div`
  flex: none;
  height: 19px;
  display: flex;
  background: linear-gradient(#2b2b2b, #353535);
  border-bottom: 1px solid #262626;
`;

const DocumentTab = styled.div`
  width: 268px;
  display: flex;
  align-items: center;
  justify-content: space-between;
  padding: 0 7px 0 9px;
  background: #4a4a4a;
  border-right: 1px solid #262626;
  font-size: 10.5px;
  font-weight: 600;
  letter-spacing: -0.17px;
`;

const CanvasRow = styled.div`
  flex: 1;
  min-height: 0;
  display: flex;
`;

const Canvas = styled.div`
  flex: 1;
  padding: 36px 0 0 230px;
  background: #5e5e5e;
`;

const VerticalTrack = styled.div`
  flex: none;
  width: 17px;
  display: flex;
  flex-direction: column;
  align-items: center;
  justify-content: space-between;
  padding: 3px 0 4px;
  background: #363636;
  border-left: 1px solid #262626;
  border-right: 2px solid #262626;
`;

const VerticalThumb = styled.div`
  width: 14px;
  height: 15px;
  background: #999;
`;

const StyledStatusBar = styled.footer`
  flex: none;
  height: 16px;
  display: flex;
  align-items: center;
  background: #484848;
  border-top: 1px solid #303030;
`;

const StatusField = styled.div`
  flex: none;
  width: ${({ $width }) => $width}px;
  height: 15px;
  margin-left: ${({ $ml }) => $ml}px;
  padding: 2px;
  background: #999;
  border: 1px solid #333;
  color: #111;
  line-height: 13px;
`;

const StatusDrop = styled.div`
  flex: none;
  width: 14px;
  height: 15px;
  display: flex;
  align-items: center;
  justify-content: center;
  background: #505050;
  border: 1px solid #333;
  border-left: 0;
`;

const StatusText = styled.div`
  width: 188px;
  margin-left: 7px;
  line-height: 17px;
  height: 15px;
  text-align: center;
  letter-spacing: -0.25px;
  border-left: 1px solid #3a3a3a;
  border-right: 1px solid #3a3a3a;
`;

const StatusNext = styled.div`
  width: 17px;
  display: flex;
  justify-content: center;
`;

const HorizontalTrack = styled.div`
  flex: 1;
  align-self: stretch;
  display: flex;
  align-items: center;
  justify-content: space-between;
  padding: 0 3px 0 2px;
  background: #343434;
  border: 1px solid #262626;
  border-width: 0 1px;
`;

const HorizontalThumb = styled.div`
  width: 14px;
  height: 15px;
  background: #999;
`;

const Corner = styled.div`
  flex: none;
  width: 17px;
  align-self: stretch;
  background: #585858;
  border-right: 2px solid #262626;
`;

const RightSide = styled.aside`
  flex: 1;
  display: flex;
  flex-direction: column;
  padding-right: 1px;
`;

const RightColumns = styled.div`
  flex: 1;
  min-height: 0;
  display: flex;
  gap: 3px;
  padding-left: 1px;
`;

const StyledIconDock = styled.div`
  flex: none;
  width: 34px;
  background: #4a4a4a;
`;

const DockGroup = styled.div`
  height: ${({ $height }) => $height}px;
  border-bottom: 1px solid #2d2d2d;
  box-shadow: inset 0 1px #565656;
`;

const DockIcons = styled.div`
  display: flex;
  flex-direction: column;
  align-items: center;
  gap: 6.5px;
  padding: 3px 0 0 1px;
`;

const Panels = styled.div`
  flex: 1;
  display: flex;
  flex-direction: column;
`;

const PanelTabs = styled.div`
  flex: none;
  height: ${({ $height }) => $height}px;
  display: flex;
  background: linear-gradient(#2c2c2c, #363636);
`;

const PanelTab = styled.div`
  flex: none;
  width: ${({ $width }) => $width}px;
  display: flex;
  align-items: center;
  justify-content: center;
  background: ${({ $active }) => ($active ? '#4a4a4a' : '#393939')};
  color: ${({ $active }) => ($active ? '#e0e0e0' : '#9c9c9c')};
  border-right: 1px solid #262626;
  font-weight: 600;
  letter-spacing: -0.3px;
`;

const PanelBody = styled.div`
  flex: none;
  height: ${({ $height }) => $height}px;
  display: flex;
  flex-direction: column;
  margin-bottom: 2px;
  padding: 5px 5px 0 5px;
  background: #4a4a4a;

  ${({ $grow }) =>
    $grow &&
    css`
      flex: 1;
      height: auto;
      margin-bottom: 0;
    `}
`;

const ActionBox = styled.div`
  flex: none;
  height: 199px;
  display: flex;
  background: #333;
  border: 1px solid #303030;
  overflow: hidden;
`;

const ActionList = styled.div`
  flex: 1;
  overflow: hidden;
`;

const StyledActionRow = styled.div`
  display: grid;
  grid-template-columns: 18px 19px 1fr;
  gap: 1px;
  height: 17.85px;
  padding-bottom: 1px;
`;

const ActionCell = styled.div`
  display: flex;
  align-items: center;
  justify-content: center;
  background: ${({ $folder }) => ($folder ? '#4b4b4b' : '#565656')};
`;

const ActionName = styled.div`
  display: flex;
  align-items: center;
  gap: ${({ $folder }) => ($folder ? 4 : 7)}px;
  min-width: 0;
  padding-left: ${({ $folder }) => ($folder ? 4 : 22)}px;
  background: ${({ $folder }) => ($folder ? '#4b4b4b' : '#5a5a5a')};
  overflow: hidden;

  ${Svg} + ${Svg} {
    margin-left: 4px;
  }
`;

const ListTrack = styled.div`
  flex: none;
  width: 11px;
  display: flex;
  flex-direction: column;
  align-items: center;
  padding: 2px 0 1px;
  background: #343434;
`;

const ListThumb = styled.div`
  width: 10px;
  height: 86px;
  margin-top: 4px;
  background: #8b8b8b;
`;

const PanelFooter = styled.div`
  flex: none;
  height: ${({ $height }) => $height}px;
  display: flex;
  align-items: center;
  margin-left: ${({ $left }) => $left - 8}px;
  margin-right: -4px;
`;

const FooterCell = styled.div`
  flex: none;
  width: 24.5px;
  height: 12px;
  display: flex;
  align-items: center;
  justify-content: center;
  margin-right: ${({ $last }) => ($last ? 18 : 0)}px;
`;

const Fx = styled.span`
  color: #ccc;
  font-family: 'Liberation Serif', serif;
  font-size: 14px;
  font-style: italic;
  font-weight: 700;
`;

const AppearanceBox = styled.div`
  flex: 1;
  border: 1px solid #333;
`;

const AppearanceRow = styled.div`
  height: 23.5px;
  display: flex;
  align-items: center;
  border-bottom: 1px solid #363636;
`;

const Thumbnail = styled.div`
  width: 18px;
  height: 18px;
  margin-left: 2px;
  background: #fff;
  border: 1px solid #222;
`;

const EyeCell = styled.div`
  align-self: stretch;
  width: 23px;
  display: flex;
  align-items: center;
  justify-content: center;
  margin-right: 3px;
  border-right: 1px solid #363636;
`;

const MiniSwatch = styled.div`
  padding: 1px;
  background: #fff;
  border: 1px solid #222;
`;

const BottomEdge = styled.div`
  flex: none;
  height: 1px;
  background: linear-gradient(90deg, #8a5a4c 0 48px, #f3ddd3 48px 197px, #8a5a4c 197px 317px, #f3ddd3 317px 768px, #7c4a42 768px);
`;

export default App;
